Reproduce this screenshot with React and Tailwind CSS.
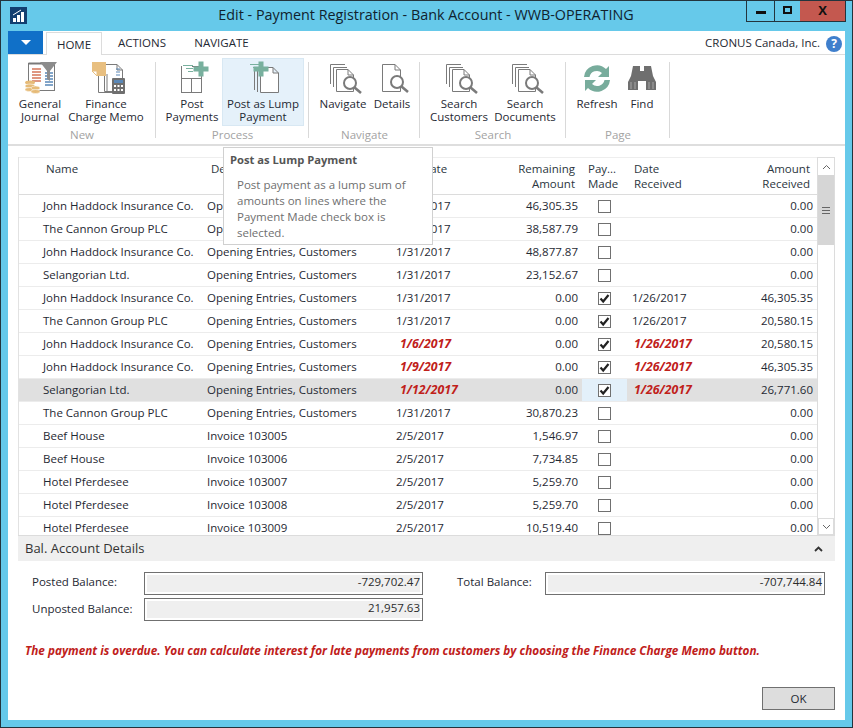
import React from "react";

const FONT = "font-['Open_Sans','Noto_Sans',sans-serif]";

const rows = [
  ["John Haddock Insurance Co.", "Opening Entries, Customers", "1/31/2017", "46,305.35", 0, "", "0.00"],
  ["The Cannon Group PLC", "Opening Entries, Customers", "1/31/2017", "38,587.79", 0, "", "0.00"],
  ["John Haddock Insurance Co.", "Opening Entries, Customers", "1/31/2017", "48,877.87", 0, "", "0.00"],
  ["Selangorian Ltd.", "Opening Entries, Customers", "1/31/2017", "23,152.67", 0, "", "0.00"],
  ["John Haddock Insurance Co.", "Opening Entries, Customers", "1/31/2017", "0.00", 1, "1/26/2017", "46,305.35"],
  ["The Cannon Group PLC", "Opening Entries, Customers", "1/31/2017", "0.00", 1, "1/26/2017", "20,580.15"],
  ["John Haddock Insurance Co.", "Opening Entries, Customers", "1/6/2017", "0.00", 1, "1/26/2017", "20,580.15", "late"],
  ["John Haddock Insurance Co.", "Opening Entries, Customers", "1/9/2017", "0.00", 1, "1/26/2017", "46,305.35", "late"],
  ["Selangorian Ltd.", "Opening Entries, Customers", "1/12/2017", "0.00", 1, "1/26/2017", "26,771.60", "late", "selected"],
  ["The Cannon Group PLC", "Opening Entries, Customers", "1/31/2017", "30,870.23", 0, "", "0.00"],
  ["Beef House", "Invoice 103005", "2/5/2017", "1,546.97", 0, "", "0.00"],
  ["Beef House", "Invoice 103006", "2/5/2017", "7,734.85", 0, "", "0.00"],
  ["Hotel Pferdesee", "Invoice 103007", "2/5/2017", "5,259.70", 0, "", "0.00"],
  ["Hotel Pferdesee", "Invoice 103008", "2/5/2017", "5,259.70", 0, "", "0.00"],
  ["Hotel Pferdesee", "Invoice 103009", "2/5/2017", "10,519.40", 0, "", "0.00"],
];

function IconBox({ children }) {
  return (
    <svg width="44" height="36" viewBox="0 0 44 36" fill="none" className="shrink-0">
      {children}
    </svg>
  );
}

const G = "#7a7a7a";

function Doc({ x, y, w, h }) {
  return (
    <path d={`M${x + 0.5} ${y + 0.5}H${x + w - 6}L${x + w - 0.5} ${y + 6}V${y + h - 0.5}H${x + 0.5}Z M${x + w - 6} ${y + 0.5}V${y + 6}H${x + w - 0.5}`} stroke={G} fill="#fff" />
  );
}

function Lens({ cx, cy }) {
  return (
    <g>
      <circle cx={cx} cy={cy} r="6" stroke={G} strokeWidth="2" fill="#fff" />
      <path d={`M${cx + 4.5} ${cy + 4.5}L${cx + 11} ${cy + 10}`} stroke={G} strokeWidth="2.6" />
    </g>
  );
}

function JournalIcon() {
  return (
    <IconBox>
      <rect x="10.5" y="3.5" width="26" height="27" stroke={G} fill="#fff" />
      <path d="M10.5 3.5h20" stroke={G} strokeWidth="2" />
      <path d="M14 9h9M14 12h9M14 15h9M14 18h9M14 21h9" stroke="#d5765a" strokeWidth="1.5" />
      <path d="M27 13h8M27 16h8M27 19h8M27 22h8M27 25h8" stroke="#5a88b8" strokeWidth="1.5" />
      <path d="M22 2h17l-7 9v10l-3-2v-8z" fill="#8c8c8c" />
      <ellipse cx="12" cy="22.5" rx="5" ry="2" fill="#e6bb78" />
      <ellipse cx="12" cy="26" rx="5" ry="2" fill="#e6bb78" stroke="#fff" strokeWidth=".5" />
      <ellipse cx="12" cy="29.5" rx="5" ry="2" fill="#e6bb78" stroke="#fff" strokeWidth=".5" />
      <ellipse cx="17.5" cy="28" rx="4.5" ry="2" fill="#e6bb78" stroke="#fff" strokeWidth=".5" />
      <ellipse cx="17.5" cy="31.5" rx="4.5" ry="2" fill="#e6bb78" stroke="#fff" strokeWidth=".5" />
    </IconBox>
  );
}

function MemoIcon() {
  return (
    <IconBox>
      <Doc x={20} y={4} w={19} h={28} />
      <path d="M14.5 14v18.5h14M23 14v18" stroke={G} />
      <path d="M32 9h4M32 12h4M32 15h4" stroke="#5a88b8" />
      <path d="M8 2h14v14h-9l-5-5z" fill="#e8bf80" />
      <path d="M8 11h5v5z" fill="#fff" stroke="#e8bf80" />
      <rect x="28" y="18" width="13" height="16" rx="1" fill="#6f6f6f" />
      <rect x="30" y="20" width="9" height="3" fill="#5a88b8" />
      <path d="M30 25h2v2h-2zM33.5 25h2v2h-2zM37 25h2v2h-2zM30 29h2v2h-2zM33.5 29h2v2h-2zM37 29h2v2h-2z" fill="#fff" />
    </IconBox>
  );
}

function Plus({ cx, cy }) {
  return <path d={`M${cx - 2.5} ${cy - 7.5}h5v5h5v5h-5v5h-5v-5h-5v-5h5z`} fill="#78b09e" />;
}

function PostIcon() {
  return (
    <IconBox>
      <rect x="11.5" y="6.5" width="20" height="26" stroke={G} fill="#fff" />
      <path d="M12 18.5h19M21.5 18v14" stroke={G} />
      <rect x="12" y="4" width="10" height="3" fill="#fff" />
      <path d="M13 5.5h10M16 8.5h7M18 11.5h5" stroke="#78b09e" />
      <Plus cx={31} cy={9} />
    </IconBox>
  );
}

function LumpIcon() {
  return (
    <IconBox>
      <path d="M13.5 10v20M16.5 10v22" stroke={G} />
      <Doc x={19} y={7} w={19} h={26} />
      <path d="M9 4.5h11M12 7.5h8M14 10.500h5" stroke="#78b09e" />
      <Plus cx={20} cy={9} />
    </IconBox>
  );
}

function StackIcon() {
  return (
    <IconBox>
      <path d="M9.5 24V4.5H24" stroke={G} />
      <path d="M12.5 27V7.5H26" stroke={G} />
      <Doc x={15} y={9} w={18} h={23} />
      <Lens cx={29} cy={23} />
    </IconBox>
  );
}

function DetailsIcon() {
  return (
    <IconBox>
      <Doc x={12} y={4} w={19} h={28} />
      <Lens cx={27} cy={22} />
    </IconBox>
  );
}

function RefreshIcon() {
  return (
    <IconBox>
      <path d="M9 17a13 13 0 0 1 22-8l3-3v11H23l4-4a7.500 7.500 0 0 0-12.500 4z" fill="#78ac9c" />
      <path d="M35 20a13 13 0 0 1-22 8l-3 3V20h11l-4 4a7.500 7.500 0 0 0 12.500-4z" fill="#78ac9c" />
    </IconBox>
  );
}

function FindIcon() {
  return (
    <IconBox>
      <path d="M13 6h7v5h4V6h7l2 10 3 6v8H26v-9h-8v9H8v-8l3-6z" fill="#6f6f6f" />
      <path d="M11 22v7M15 22v7M29 22v7M33 22v7" stroke="#a8a8a8" />
    </IconBox>
  );
}

function RibbonButton({ icon, lines, w, ml = "", active = false }) {
  return (
    <div className={`${w} ${ml} h-[66px] flex flex-col items-center ${active ? "bg-[#e5f1fa] outline outline-1 outline-[#d8e8f3]" : ""}`}>
      <div className="h-[38px] pt-[1px] flex justify-center">{icon}</div>
      <div className="text-[11.5px] leading-[13px] text-center whitespace-nowrap text-[#1f2933]">
        {lines.map((l) => (
          <div key={l}>{l}</div>
        ))}
      </div>
    </div>
  );
}

function Group({ w, label, pl, children }) {
  return (
    <div className={`${w} h-[90px] relative flex flex-col`}>
      <div className={`${pl} pt-[4px] flex h-[70px]`}>{children}</div>
      <div className="text-[11.5px] leading-[14px] text-[#a3a3a3] text-center mt-[3px]">{label}</div>
      <div className="absolute right-0 top-[7px] h-[76px] w-px bg-[#d9d9d9]" />
    </div>
  );
}

function CheckBox({ on }) {
  return (
    <div className="w-[13px] h-[13px] border border-[#707070] bg-white flex items-center justify-center">
      {on ? (
        <svg width="11" height="11" viewBox="0 0 11 11">
          <path d="M1.500 5.500L4.200 8.500L9.500 2" stroke="#222" strokeWidth="2.200" fill="none" />
        </svg>
      ) : null}
    </div>
  );
}

function Row({ r }) {
  const [name, desc, date, rem, paid, recv, amt, late, selected] = r;
  const red = "text-[12.3px] font-bold italic text-[#c0201a]";
  return (
    <div className={`flex h-[23px] shrink-0 items-center border-b border-[#ececec] text-[11.5px] text-[#1f2933] ${selected ? "bg-[#e0e0e0]" : "bg-white"}`}>
      <div className="w-[184px] pl-[24px] whitespace-nowrap">{name}</div>
      <div className="w-[189px] pl-[4px] whitespace-nowrap">{desc}</div>
      <div className={`w-[84px] whitespace-nowrap ${late ? `pl-[8px] ${red}` : "pl-[4px]"}`}>{date}</div>
      <div className="w-[102px] text-right">{rem}</div>
      <div className={`w-[45px] ml-[4px] h-full flex items-center justify-center ${selected ? "bg-[#e3f0fa]" : ""}`}>
        <CheckBox on={paid} />
      </div>
      <div className={`w-[74px] whitespace-nowrap ${late ? `pl-[7px] ${red}` : "pl-[5px]"}`}>{recv}</div>
      <div className="w-[112px] text-right">{amt}</div>
    </div>
  );
}

function Field({ value, w = "w-[279px]" }) {
  return (
    <div className={`${w} h-[23px] border border-[#707070] p-[2px] bg-white`}>
      <div className="h-full bg-[#efefef] text-right text-[11.5px] leading-[14px] text-[#2b2b2b] whitespace-nowrap">{value}</div>
    </div>
  );
}

function Scrollbar() {
  return (
    <div className="w-[18px] border-x border-[#dcdcdc] flex flex-col">
      <div className="h-[18px] flex items-center justify-center border-t border-[#dcdcdc]">
        <svg width="9" height="6" viewBox="0 0 9 6"><path d="M1 5l3.500-3.500L8 5" stroke="#666" fill="none" /></svg>
      </div>
      <div className="h-[70px] bg-[#d6d6d6] flex items-center justify-center">
        <div className="w-[8px] h-[7px] border-y border-[#666] flex items-center"><div className="w-full h-px bg-[#666]" /></div>
      </div>
      <div className="flex-1" />
      <div className="h-[17px] flex items-center justify-center border border-[#dcdcdc]">
        <svg width="9" height="6" viewBox="0 0 9 6"><path d="M1 1l3.500 3.500L8 1" stroke="#666" fill="none" /></svg>
      </div>
    </div>
  );
}

export default function App() {
  return (
    <div className={`relative w-[853px] h-[728px] overflow-hidden bg-[#66c9ea] border border-[#23343d] flex flex-col text-[#1f2933] ${FONT}`}>
      {/* title bar */}
      <div className="h-[30px] shrink-0 flex items-start px-[9px] relative">
        <svg width="17" height="17" viewBox="0 0 17 17" className="mt-[6px]">
          <rect width="17" height="17" fill="#123f70" />
          <path d="M3 11h3v4H3zM7 8h3v7H7zM11 5h3v10h-3z" fill="#fff" />
          <path d="M3 8l8-5" stroke="#fff" />
        </svg>
        <div className="flex-1 text-center text-[14.35px] leading-[28px] text-[#10222e] whitespace-nowrap pr-[18px]">
          Edit - Payment Registration - Bank Account - WWB-OPERATING
        </div>
        <div className="absolute right-[6px] top-0 flex h-[21px] border border-t-0 border-[#23343d]">
          <div className="w-[28px] border-r border-[#23343d] flex items-center justify-center">
            <div className="w-[10px] h-[3px] bg-[#111] mt-[3px]" />
          </div>
          <div className="w-[25px] flex items-center justify-center">
            <div className="w-[9px] h-[8px] border-2 border-[#111] mb-[2px]" />
          </div>
          <div className="w-[45px] bg-[#c4584f] flex items-center justify-center text-[13px] font-bold leading-none pb-[2px] text-[#111]">X</div>
        </div>
      </div>

      {/* client area */}
      <div className="mx-[7px] mb-[7px] flex-1 bg-white flex flex-col min-h-0">
        {/* tabs */}
        <div className="h-[24px] shrink-0 flex items-end border-b border-[#dcdcdc] relative">
          <div className="w-[35px] h-[23px] bg-[#1070c8] flex items-center justify-center mb-[-1px] self-start">
            <div className="w-0 h-0 border-x-[5px] border-x-transparent border-t-[5px] border-t-white" />
          </div>
          <div className="ml-[3px] w-[56px] h-[23px] bg-white border border-b-0 border-[#dcdcdc] text-[11.5px] leading-[24px] text-center mb-[-1px]">HOME</div>
          <div className="w-[80px] text-[11.5px] leading-[23px] text-center">ACTIONS</div>
          <div className="w-[79px] text-[11.5px] leading-[23px] text-center">NAVIGATE</div>
          <div className="flex-1" />
          <div className="text-[11.5px] leading-[23px] whitespace-nowrap">CRONUS Canada, Inc.</div>
          <div className="w-[16px] h-[16px] rounded-full bg-[#3f7fcc] text-white text-[12px] font-bold leading-[16px] text-center ml-[6px] mr-[3px] mb-[2px]">?</div>
        </div>

        {/* ribbon */}
        <div className="h-[91px] shrink-0 flex border-b-2 border-[#dedede]">
          <Group w="w-[148px]" label="New" pl="pl-0">
            <RibbonButton w="w-[64px]" icon={<JournalIcon />} lines={["General", "Journal"]} />
            <RibbonButton w="w-[68px]" icon={<MemoIcon />} lines={["Finance", "Charge Memo"]} />
          </Group>
          <Group w="w-[153px]" label="Process" pl="pl-[5px]">
            <RibbonButton w="w-[62px]" icon={<PostIcon />} lines={["Post", "Payments"]} />
            <RibbonButton w="w-[80px]" active icon={<LumpIcon />} lines={["Post as Lump", "Payment"]} />
          </Group>
          <Group w="w-[111px]" label="Navigate" pl="pl-[7px]">
            <RibbonButton w="w-[54px]" icon={<StackIcon />} lines={["Navigate"]} />
            <RibbonButton w="w-[44px]" icon={<DetailsIcon />} lines={["Details"]} />
          </Group>
          <Group w="w-[146px]" label="Search" pl="pl-[4px]">
            <RibbonButton w="w-[70px]" icon={<StackIcon />} lines={["Search", "Customers"]} />
            <RibbonButton w="w-[62px]" icon={<StackIcon />} lines={["Search", "Documents"]} />
          </Group>
          <Group w="w-[104px]" label="Page" pl="pl-[9px]">
            <RibbonButton w="w-[44px]" icon={<RefreshIcon />} lines={["Refresh"]} />
            <RibbonButton w="w-[46px]" icon={<FindIcon />} lines={["Find"]} />
          </Group>
        </div>

        {/* table */}
        <div className="mt-[11px] ml-[10px] w-[817px] h-[378px] shrink-0 flex border-l border-[#e2e2e2]">
          <div className="w-[799px] flex flex-col overflow-hidden">
            <div className="h-[38px] shrink-0 flex border-y border-[#dcdcdc] border-t-[#eeeeee] text-[11.5px] leading-[15px] text-[#2b3640] pt-[3px]">
              <div className="w-[184px] pl-[27px]">Name</div>
              <div className="w-[189px] pl-[8px]">Description</div>
              <div className="w-[74px] pl-[5px] whitespace-nowrap">Due Date</div>
              <div className="w-[109px] text-right">Remaining<br />Amount</div>
              <div className="w-[57px] pl-[13px]">Pay...<br />Made</div>
              <div className="w-[70px] pl-[2px] whitespace-nowrap">Date<br />Received</div>
              <div className="w-[108px] text-right">Amount<br />Received</div>
            </div>
            <div className="flex-1 flex flex-col overflow-hidden">
              {rows.map((r, i) => (
                <Row key={i} r={r} />
              ))}
            </div>
          </div>
          <Scrollbar />
        </div>

        {/* bal */}
        <div className="ml-[10px] w-[817px] h-[26px] shrink-0 bg-[#efefef] border-t border-[#dcdcdc] flex items-center justify-between pl-[7px] pr-[12px]">
          <div className="text-[13px] text-[#333]">Bal. Account Details</div>
          <svg width="9" height="6" viewBox="0 0 9 6"><path d="M1 5l3.500-3.500L8 5" stroke="#333" strokeWidth="1.800" fill="none" /></svg>
        </div>

        <div className="mt-[11px] flex text-[11.5px] text-[#1f2933]">
          <div className="flex flex-col gap-[3px]">
            <div className="flex items-center">
              <div className="w-[112px] ml-[24px] pb-[3px]">Posted Balance:</div>
              <Field value="-729,702.47" />
            </div>
            <div className="flex items-center">
              <div className="w-[112px] ml-[24px] pb-[2px]">Unposted Balance:</div>
              <Field value="21,957.63" />
            </div>
          </div>
          <div className="flex items-center self-start ml-[34px]">
            <div className="w-[88px] pb-[3px]">Total Balance:</div>
            <Field value="-707,744.84" w="w-[280px]" />
          </div>
        </div>

        <div className="mt-[21px] ml-[17px] text-[11.75px] leading-[16px] font-bold italic text-[#c0201a] whitespace-nowrap">
          The payment is overdue. You can calculate interest for late payments from customers by choosing the Finance Charge Memo button.
        </div>

        <div className="flex justify-end mt-[29px] pr-[10px]">
          <div className="w-[73px] h-[23px] bg-[#dddddd] border border-[#707070] text-[11.5px] leading-[21px] text-center">OK</div>
        </div>
      </div>

      {/* tooltip */}
      <div className="absolute left-[222px] top-[146px] w-[210px] h-[98px] bg-white border border-[#d0d0d0] text-[#6f6f6f] text-[11.5px] leading-[16px]">
        <div className="font-bold text-[11.2px] pl-[6px] pt-[4px] text-[#555]">Post as Lump Payment</div>
        <div className="pl-[13px] pr-[6px] pt-[9px]">
          <div className="whitespace-nowrap">Post payment as a lump sum of</div>
          <div className="whitespace-nowrap">amounts on lines where the</div>
          <div className="whitespace-nowrap">Payment Made check box is</div>
          <div className="whitespace-nowrap">selected.</div>
        </div>
      </div>
    </div>
  );
}
